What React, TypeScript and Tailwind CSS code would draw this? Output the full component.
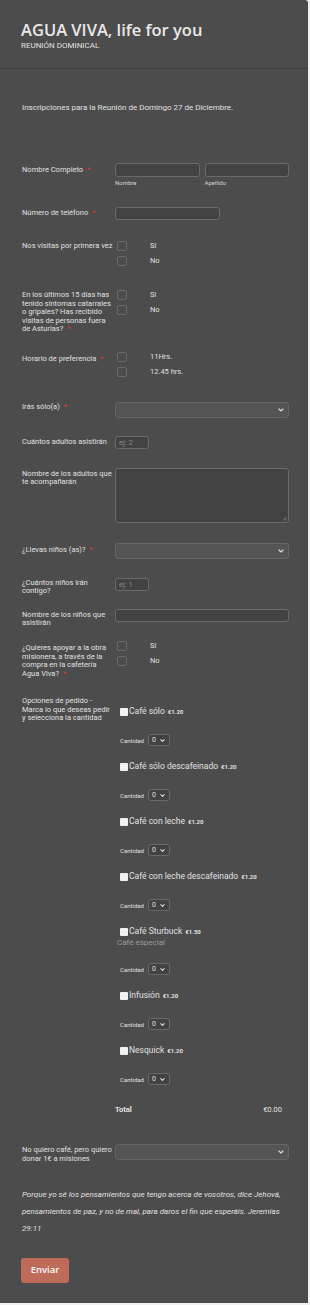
import { ChevronDown } from 'lucide-react';

const products = [
  { name: 'Café sólo', price: '€1.20' },
  { name: 'Café sólo descafeinado', price: '€1.20' },
  { name: 'Café con leche', price: '€1.20' },
  { name: 'Café con leche descafeinado', price: '€1.20' },
  { name: 'Café Sturbuck', price: '€1.50', desc: 'Café especial' },
  { name: 'Infusión', price: '€1.20' },
  { name: 'Nesquick', price: '€1.20' },
];

function Req() {
  return <span className="ml-[4px] text-[#e53935]">*</span>;
}

function Row({ label, req, h, pt = 0, children }: { label: string; req?: boolean; h: number; pt?: number; children?: React.ReactNode }) {
  return (
    <div className="flex" style={{ height: h }}>
      <div className="w-[93px] shrink-0 text-[7.5px] leading-[8.5px] text-[#e0e0e0]" style={{ paddingTop: pt }}>
        {label}
        {req && <Req />}
      </div>
      <div className="flex-1">{children}</div>
    </div>
  );
}

function Checks({ items }: { items: string[] }) {
  return (
    <div className="flex flex-col gap-[5px] pl-[2px]">
      {items.map((i) => (
        <div key={i} className="flex h-[10px] items-center">
          <span className="h-[10px] w-[10px] rounded-[2px] border border-[#6a6a6a]" />
          <span className="ml-[23px] text-[7.5px] text-[#e0e0e0]">{i}</span>
        </div>
      ))}
    </div>
  );
}

function Select() {
  return (
    <div className="flex h-[16px] items-center justify-end rounded-[3px] border border-[#666] bg-[#545454] pr-[3px]">
      <ChevronDown className="h-[8px] w-[8px] text-[#ddd]" strokeWidth={3.5} />
    </div>
  );
}

function Input({ w, ph }: { w?: number; ph?: string }) {
  return (
    <div
      className="flex h-[13px] items-center rounded-[3px] border border-[#6a6a6a] bg-[#424242] pl-[3px] text-[7.5px] text-[#8a8a8a]"
      style={{ width: w }}
    >
      {ph}
    </div>
  );
}

export default function App() {
  return (
    <div className="min-h-[1305px] bg-[#f1f1f1] font-['Roboto',sans-serif]">
      <div className="h-[1303px] w-[308px] rounded-tr-[3px] bg-[#4c4c4c]">
        <div className="h-[69px] border-b border-[#3e3e3e] px-[21px] pt-[19px]">
          <div className="font-['Open_Sans',sans-serif] text-[16.5px] font-semibold leading-[22px] text-[#e9e9e9]">
            AGUA VIVA, life for you
          </div>
          <div className="text-[8px] leading-[10px] text-[#e0e0e0]">REUNIÓN DOMINICAL</div>
        </div>

        <div className="px-[22px] pt-[34px] pb-[50px] text-[8px] leading-[10px] text-[#e0e0e0]">
          Inscripciones para la Reunión de Domingo 27 de Diciembre.
        </div>

        <div className="pl-[22px] pr-[19px]">
          <Row label="Nombre Completo" req h={44} pt={3}>
            <div className="flex gap-[5px]">
              <div className="flex-1">
                <div className="h-[14px] rounded-[3px] border border-[#6a6a6a] bg-[#424242]" />
                <div className="mt-[2px] text-[6px] leading-[8px] text-[#d6d6d6]">Nombre</div>
              </div>
              <div className="flex-1">
                <div className="h-[14px] rounded-[3px] border border-[#6a6a6a] bg-[#424242]" />
                <div className="mt-[2px] text-[6px] leading-[8px] text-[#d6d6d6]">Apellido</div>
              </div>
            </div>
          </Row>

          <Row label="Número de teléfono" req h={34} pt={2}>
            <Input w={105} />
          </Row>

          <Row label="Nos visitas por primera vez" h={49} pt={1}>
            <Checks items={['Si', 'No']} />
          </Row>

          <Row label="En los últimos 15 días has tenido sintomas catarrales o gripales? Has recibido visitas de personas fuera de Asturias?" req h={62} pt={1}>
            <Checks items={['Si', 'No']} />
          </Row>

          <Row label="Horario de preferencia" req h={50} pt={2.5}>
            <Checks items={['11Hrs.', '12.45 hrs.']} />
          </Row>

          <Row label="Irás sólo(a)" req h={34} pt={1}>
            <Select />
          </Row>

          <Row label="Cuántos adultos asistirán" h={32} pt={1.5}>
            <Input w={34} ph="ej: 2" />
          </Row>

          <Row label="Nombre de los adultos que te acompañarán" h={75} pt={1.5}>
            <div className="relative h-[55px] rounded-[3px] border border-[#6a6a6a] bg-[#424242]">
              <svg className="absolute right-[1px] bottom-[1px]" width="5" height="5" viewBox="0 0 5 5">
                <path d="M4.5 1 L1 4.5 M4.5 3 L3 4.5" stroke="#999" strokeWidth="0.7" />
              </svg>
            </div>
          </Row>

          <Row label="¿Llevas niños (as)?" req h={35} pt={2.5}>
            <Select />
          </Row>

          <Row label="¿Cuántos niños irán contigo?" h={31} pt={0.5}>
            <Input w={34} ph="ej: 1" />
          </Row>

          <Row label="Nombre de los niños que asistirán" h={32} pt={1.5}>
            <Input />
          </Row>

          <Row label="¿Quieres apoyar a la obra misionera, a través de la compra en la cafetería Agua Viva?" req h={56} pt={3}>
            <Checks items={['Si', 'No']} />
          </Row>

          <div className="flex">
            <div className="w-[93px] shrink-0 pr-[5px] text-[7.5px] leading-[8.5px] text-[#e0e0e0]">
              Opciones de pedido - Marca lo que deseas pedir y selecciona la cantidad
            </div>
            <div className="flex-1 pt-[9px]">
              {products.map((p) => (
                <div key={p.name} className="pl-[5px]">
                  <div className="flex h-[10px] items-center">
                    <span className="mt-[1px] h-[8px] w-[8px] rounded-[1px] bg-[#f2f2f2]" />
                    <span className="ml-[1px] text-[8.5px] text-[#e0e0e0]">{p.name}</span>
                    <span className="ml-[3px] text-[6px] font-bold text-[#e0e0e0]">{p.price}</span>
                  </div>
                  {p.desc && (
                    <div className="-ml-[3px] mt-[2px] text-[8px] leading-[10px] text-[#9a9a9a]">{p.desc}</div>
                  )}
                  <div className={`flex h-[12px] items-center ${p.desc ? 'mt-[15px]' : 'mt-[18px]'}`}>
                    <span className="text-[6px] text-[#e0e0e0]">Cantidad</span>
                    <div className="ml-[4px] flex h-[12px] w-[22px] items-center justify-between rounded-[3px] border border-[#6a6a6a] bg-[#424242] px-[3px] text-[7px] text-[#e0e0e0]">
                      <span>0</span>
                      <ChevronDown className="h-[7px] w-[7px]" strokeWidth={3.5} />
                    </div>
                  </div>
                  <div className="h-[15px]" />
                </div>
              ))}
              <div className="mt-[4px] flex h-[12px] items-center justify-between pr-[7px] text-[7.5px] text-[#e0e0e0]">
                <span className="font-bold">Total</span>
                <span>€0.00</span>
              </div>
            </div>
          </div>

          <div className="h-[28px]" />

          <Row label="No quiero café, pero quiero donar 1€ a misiones" h={38} pt={2}>
            <Select />
          </Row>
        </div>

        <div className="px-[22px] pt-[4px] text-[8px] leading-[17px] italic text-[#e0e0e0]">
          Porque yo sé los pensamientos que tengo acerca de vosotros, dice Jehová, pensamientos de paz, y no de mal, para daros el fin que esperáis. Jeremías 29:11
        </div>

        <div className="px-[21px] pt-[19px]">
          <button className="h-[25px] w-[48px] rounded-[3px] bg-[#bf6b5a] font-['Open_Sans',sans-serif] text-[9.5px] font-semibold text-white">
            Enviar
          </button>
        </div>
      </div>
    </div>
  );
}
